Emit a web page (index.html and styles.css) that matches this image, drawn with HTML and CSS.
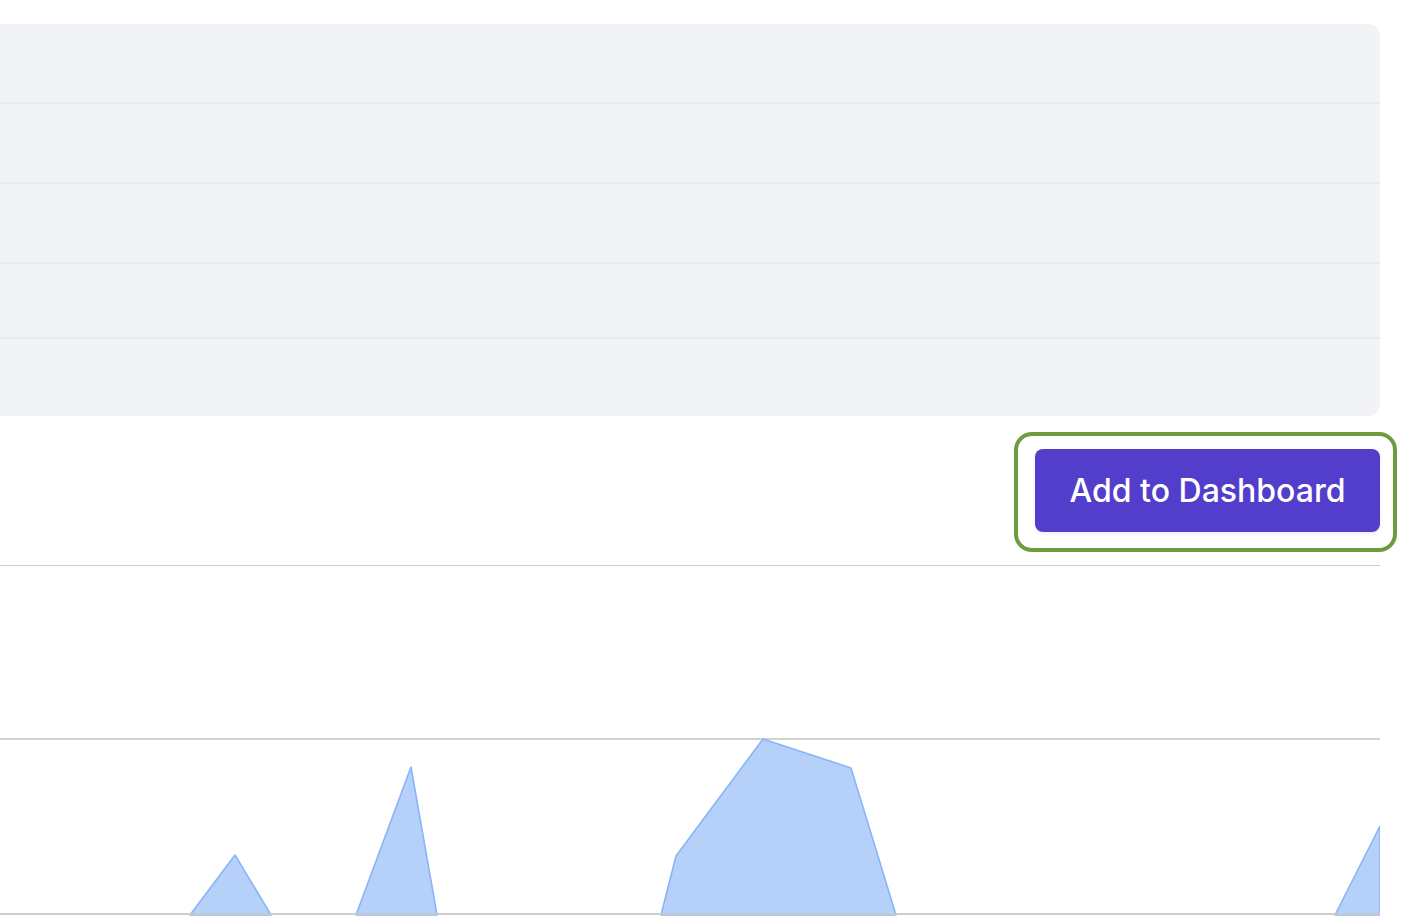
FILE: index.html
```html
<!DOCTYPE html>
<html lang="en">
<head>
<meta charset="utf-8">
<title>Dashboard</title>
<link rel="stylesheet" href="styles.css">
</head>
<body>
<div class="page">
  <div class="table">
    <div class="row r1"></div>
    <div class="row r2"></div>
    <div class="row r3"></div>
    <div class="row r4"></div>
    <div class="row r5"></div>
  </div>
  <div class="actions">
    <span class="focus-wrap">
      <button class="btn-primary" type="button">Add to Dashboard</button>
    </span>
  </div>
  <div class="chart">
    <svg class="chart-svg" width="1380" height="351" viewBox="0 0 1380 351" xmlns="http://www.w3.org/2000/svg">
      <line x1="0" y1="0.5" x2="1380" y2="0.5" stroke="#cccccc" stroke-width="1"/>
      <line x1="0" y1="174" x2="1380" y2="174" stroke="#d2d2d2" stroke-width="2"/>
      <g fill="#b6d1f9" stroke="#8ab4f8" stroke-width="1.6" stroke-linejoin="round">
        <polygon points="190,350 235,290 271,350"/>
        <polygon points="356,350 411,202 437,350"/>
        <polygon points="661,350 676,291 763,174 851,203 896,350"/>
        <polygon points="1335,350 1380,261 1380,350"/>
      </g>
      <line x1="0" y1="349" x2="1380" y2="349" stroke="#c8c8c8" stroke-opacity="0.9" stroke-width="2"/>
    </svg>
  </div>
</div>
</body>
</html>
```

FILE: styles.css
```css
html, body {
  margin: 0;
  padding: 0;
  background: #ffffff;
  overflow: hidden;
}

body {
  font-family: "Inter", "Liberation Sans", sans-serif;
}

.page {
  width: 1380px;
  display: flex;
  flex-direction: column;
}

.table {
  margin-top: 24px;
  background: #f2f3f7;
  border-radius: 0 12px 12px 0;
  display: flex;
  flex-direction: column;
  overflow: hidden;
}

.row {
  height: 78px;
  border-bottom: 2px solid #e8e9ee;
}

.row.r4 {
  height: 73px;
}

.row.r5 {
  height: 77px;
  border-bottom: none;
}

.actions {
  display: flex;
  justify-content: flex-end;
  padding-top: 33px;
  padding-bottom: 33px;
}

.focus-wrap {
  position: relative;
  display: inline-flex;
}

.focus-wrap::after {
  content: "";
  position: absolute;
  top: -17px;
  left: -21px;
  right: -17px;
  bottom: -20px;
  border: 4px solid #6f9b40;
  border-radius: 18px;
  pointer-events: none;
}

.btn-primary {
  width: 345px;
  height: 83px;
  border: none;
  border-radius: 8px;
  background: #523ecb;
  color: #ffffff;
  font-family: "Inter", "Liberation Sans", sans-serif;
  font-size: 32px;
  font-weight: 500;
  padding: 0;
  box-shadow: 0 2px 4px rgba(40, 30, 110, 0.08);
  cursor: pointer;
}

.chart {
  height: 351px;
}

.chart-svg {
  display: block;
}
```
